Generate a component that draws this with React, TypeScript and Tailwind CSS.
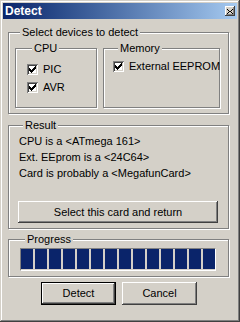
import React from 'react';

const raised =
  'shadow-[inset_-1px_-1px_#404040,inset_1px_1px_#fff,inset_-2px_-2px_#808080]';

function CheckMark() {
  // classic 7x7 pixel check
  const px: [number, number][] = [
    [6, 0],
    [5, 1], [6, 1],
    [0, 2], [4, 2], [5, 2], [6, 2],
    [0, 3], [1, 3], [3, 3], [4, 3], [5, 3],
    [0, 4], [1, 4], [2, 4], [3, 4], [4, 4],
    [1, 5], [2, 5], [3, 5],
    [2, 6],
  ];
  return (
    <svg width="7" height="7" viewBox="0 0 7 7" shapeRendering="crispEdges">
      {px.map(([x, y]) => (
        <rect key={`${x}-${y}`} x={x} y={y} width="1" height="1" fill="#000" />
      ))}
    </svg>
  );
}

function CheckBox({ label }: { label: string }) {
  return (
    <label className="flex items-center gap-[5px] h-[17px] whitespace-nowrap">
      <span className="w-[11px] h-[11px] bg-white flex items-center justify-center shrink-0 shadow-[inset_1px_1px_#808080,inset_-1px_-1px_#fff,inset_2px_2px_#404040,inset_-2px_-2px_#d4d0c8]">
        <CheckMark />
      </span>
      <span>{label}</span>
    </label>
  );
}

function Group({
  title,
  className,
  children,
}: {
  title: string;
  className?: string;
  children: React.ReactNode;
}) {
  return (
    <fieldset
      className={`min-w-0 border border-[#808080] shadow-[1px_1px_0_#fff,inset_1px_1px_0_#fff] ${className ?? ''}`}
    >
      <legend className="ml-[5px] px-[2px] leading-[13px] bg-[#d4d0c8]">{title}</legend>
      {children}
    </fieldset>
  );
}

export default function App() {
  return (
    <div
      className="w-[240px] h-[322px] bg-[#d4d0c8] p-[3px] flex flex-col text-[11px] text-black shadow-[inset_-1px_-1px_#404040,inset_1px_1px_#d4d0c8,inset_-2px_-2px_#808080,inset_2px_2px_#fff]"
      style={{ fontFamily: '"Liberation Sans", Arial, sans-serif' }}
    >
      {/* Title bar */}
      <div className="h-[16px] shrink-0 bg-linear-to-r from-[#0a246a] to-[#a6caf0] flex items-center justify-between pl-[2px] pr-[2px]">
        <span className="text-white font-bold text-[12px] leading-[16px]">Detect</span>
        <span className={`w-[10px] h-[10px] bg-[#d4d0c8] flex items-center justify-center ${raised}`}>
          <svg width="6" height="5" viewBox="0 0 6 5" shapeRendering="crispEdges">
            <path d="M0 0h1v1h-1zM5 0h1v1h-1zM1 1h1v1h-1zM4 1h1v1h-1zM2 2h2v1h-2zM1 3h1v1h-1zM4 3h1v1h-1zM0 4h1v1h-1zM5 4h1v1h-1z" fill="#000" />
          </svg>
        </span>
      </div>

      {/* Body */}
      <div className="flex flex-col pl-[5px]">
        <Group title="Select devices to detect" className="mt-[7px] w-[221px] h-[88px] pl-[6px] pt-[3px]">
          <div className="flex gap-[6px]">
            <Group title="CPU" className="w-[82px] h-[66px] pl-[11px] pt-[6px]">
              <div className="flex flex-col gap-[1px]">
                <CheckBox label="PIC" />
                <CheckBox label="AVR" />
              </div>
            </Group>
            <Group title="Memory" className="w-[117px] h-[66px] pl-[9px] pt-[3px]">
              <CheckBox label="External EEPROM" />
            </Group>
          </div>
        </Group>

        <Group title="Result" className="mt-[5px] w-[221px] h-[110px] pl-[9px] pt-[1px]">
          <div className="pl-[1px] leading-[16px]">
            <p>CPU is a &lt;ATmega 161&gt;</p>
            <p>Ext. EEprom is a &lt;24C64&gt;</p>
            <p>Card is probably a &lt;MegafunCard&gt;</p>
          </div>
          <button className={`mt-[20px] w-[200px] h-[22px] bg-[#d4d0c8] ${raised}`}>
            Select this card and return
          </button>
        </Group>

        <Group title="Progress" className="mt-[4px] w-[221px] h-[44px] pl-[11px] pt-[2px]">
          <div className="w-[196px] h-[23px] border border-t-[#808080] border-l-[#808080] border-b-white border-r-white pb-[1px] flex gap-[2px]">
            {Array.from({ length: 14 }).map((_, i) => (
              <div key={i} className="w-[12px] h-full bg-[#0a246a]" />
            ))}
          </div>
        </Group>

        <div className="mt-[5px] w-[222px] flex justify-center gap-[6px]">
          <button className={`w-[75px] h-[23px] bg-[#d4d0c8] border border-black ${raised}`}>
            Detect
          </button>
          <button className={`w-[75px] h-[23px] bg-[#d4d0c8] ${raised}`}>Cancel</button>
        </div>
      </div>
    </div>
  );
}
